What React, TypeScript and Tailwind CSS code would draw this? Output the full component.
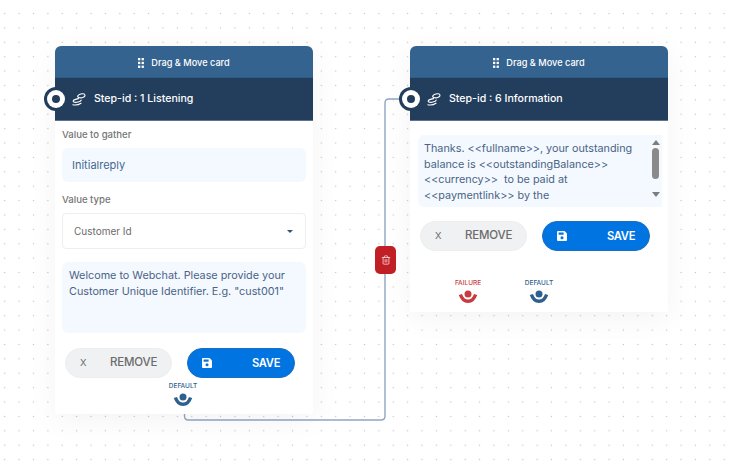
import React from "react";
import { Trash2 } from "lucide-react";

const font = "font-['Inter','Liberation_Sans',sans-serif]";

function Grip() {
  return (
    <svg width="6" height="10" viewBox="0 0 6 10" fill="#fff">
      <rect x="0" y="0" width="2.3" height="2.3" />
      <rect x="3.6" y="0" width="2.3" height="2.3" />
      <rect x="0" y="3.8" width="2.3" height="2.3" />
      <rect x="3.6" y="3.8" width="2.3" height="2.3" />
      <rect x="0" y="7.6" width="2.3" height="2.3" />
      <rect x="3.6" y="7.6" width="2.3" height="2.3" />
    </svg>
  );
}

function Squiggle() {
  return (
    <svg width="14" height="13" viewBox="0 0 14 13" fill="none" stroke="#fff" strokeWidth="1.1" strokeLinecap="round">
      <path d="M7.4 1.4C9.8.4 12.8.6 13 2.2 13.2 4 10.2 5.2 7.6 4.8 5.2 4.4 4.8 2.6 7.4 1.4Z" />
      <path d="M6.6 5.6C4 6 1.2 7 1.2 8.2 1.2 9.3 3.2 9.6 5 9.3 7 9 9 8.2 9.2 7" />
      <path d="M.8 11.8C3.6 12.4 7 11.6 9 10.2" />
    </svg>
  );
}

function FloppyIcon() {
  return (
    <svg width="10" height="10" viewBox="0 0 10 10" className="ml-[14px]">
      <path d="M1 0H7.6L10 2.4V9A1 1 0 0 1 9 10H1A1 1 0 0 1 0 9V1A1 1 0 0 1 1 0Z" fill="#fff" />
      <rect x="1.6" y="1.5" width="5" height="2.2" fill="#0074e0" />
      <circle cx="5" cy="6.8" r="1.5" fill="#0074e0" />
    </svg>
  );
}

function Head({ title }: { title: string }) {
  return (
    <>
      <div className="h-8 pt-[3px] bg-[#34638f] rounded-t-[6px] flex items-center justify-center gap-[7px] text-white text-[9.2px] font-medium border-b border-[#2f5a82]">
        <Grip />
        <span>Drag &amp; Move card</span>
      </div>
      <div className="h-[43px] bg-[#233d5d] border-b border-[#5c7390] flex items-center pl-[17px] gap-[8px] text-white text-[10.6px] font-medium">
        <Squiggle />
        <span>{title}</span>
      </div>
      <div className="absolute left-[-11px] top-[41px] w-[24px] h-[24px] rounded-full bg-[#233d5d] flex items-center justify-center">
        <div className="w-[18px] h-[18px] rounded-full bg-white flex items-center justify-center">
          <div className="w-[8px] h-[8px] rounded-full bg-[#233d5d]" />
        </div>
      </div>
    </>
  );
}

function Buttons() {
  return (
    <div className="flex gap-[15px]">
      <div className="w-[107px] h-[30px] rounded-full bg-[#f0f1f3] border border-[#eceef0] flex items-center text-[#6b6b6b]">
        <span className="ml-[14px] text-[9.5px] w-[30px]">X</span>
        <span className="text-[11.5px] font-medium tracking-[-0.2px]">REMOVE</span>
      </div>
      <div className="w-[108px] h-[30px] rounded-full bg-[#0074e0] border border-[#1a6fc0] flex items-center text-white">
        <FloppyIcon />
        <span className="ml-[40px] text-[11.2px] font-semibold tracking-[-0.3px]">SAVE</span>
      </div>
    </div>
  );
}

function Port({ label, color, className }: { label: string; color: string; className: string }) {
  return (
    <div className={`absolute flex flex-col items-center w-10 ${className}`}>
      <span className="text-[6.5px] font-medium leading-[8px]" style={{ color }}>{label}</span>
      <svg width="20" height="14" viewBox="0 0 20 14" className="mt-[3px]" fill="none">
        <circle cx="10" cy="4" r="3.5" fill={color} />
        <path d="M2.4 4.4C4 9.4 7 11.2 10 11.2 13 11.2 16 9.4 17.6 4.4" stroke={color} strokeWidth="3.4" />
      </svg>
    </div>
  );
}

export default function App() {
  return (
    <div className={`relative w-[736px] h-[466px] overflow-hidden bg-white bg-[radial-gradient(circle,#c4c4c4_0.7px,transparent_1px)] bg-[length:14.4px_14.4px] bg-[position:-2.5px_6.3px] ${font}`}>
      <svg className="absolute inset-0" width="736" height="466" fill="none">
        <path d="M184.5 404V416Q184.5 420 188.5 420H381Q385 420 385 416V103Q385 99 389 99H402" stroke="#8fa6c2" strokeWidth="1.4" />
      </svg>

      <div className="absolute left-[55px] top-[46px] w-[258px] h-[368px] bg-white shadow-[0_6px_30px_rgba(0,0,0,0.05)] rounded-t-[6px]">
        <Head title="Step-id : 1 Listening" />
        <div className="px-[7px] pt-[7px]">
          <div className="text-[9.6px] font-medium text-[#757575] leading-[14px]">Value to gather</div>
          <div className="mt-[6px] h-[34px] rounded-[6px] bg-[#f4f9ff] flex items-center pl-[10px] text-[11px] text-[#45688f]">Initialreply</div>
          <div className="mt-[11px] text-[9.6px] font-medium text-[#757575] leading-[14px]">Value type</div>
          <div className="mt-[6px] h-[36px] rounded-[4px] border border-[#eeeeee] flex items-center justify-between pl-[11px] pr-[12px] text-[10px] text-[#6b6b6b]">
            <span>Customer Id</span>
            <span className="w-0 h-0 border-x-[3.5px] border-x-transparent border-t-[3.5px] border-t-[#34527a]" />
          </div>
          <div className="mt-[13px] h-[71px] rounded-[6px] bg-[#f4f9ff] px-[7px] pt-[6px] text-[10.8px] leading-[16px] text-[#4a6386]">
            Welcome to Webchat. Please provide your Customer Unique Identifier. E.g. "cust001"
          </div>
          <div className="mt-[15px] ml-[3px]"><Buttons /></div>
        </div>
        <Port label="DEFAULT" color="#2f5f8d" className="left-[108px] top-[336px]" />
      </div>

      <div className="absolute left-[410px] top-[46px] w-[258px] h-[266px] bg-white shadow-[0_6px_30px_rgba(0,0,0,0.05)] rounded-t-[6px]">
        <Head title="Step-id : 6 Information" />
        <div className="px-[8px] pt-[14px]">
          <div className="h-[72px] w-[244px] rounded-l-[6px] bg-[#f4f9ff] flex overflow-hidden">
            <div className="flex-1 pl-[6px] pt-[6px] text-[10.8px] leading-[15.6px] text-[#4a6386] whitespace-pre">
              {"Thanks. <<fullname>>, your outstanding\nbalance is <<outstandingBalance>>\n<<currency>>  to be paid at\n<<paymentlink>> by the"}
            </div>
            <div className="w-[13px] flex flex-col items-center pt-[5px]">
              <span className="w-0 h-0 border-x-[4px] border-x-transparent border-b-[5px] border-b-[#7d7d7d]" />
              <span className="mt-[3px] w-[7px] h-[31px] rounded-full bg-[#8a8a8a]" />
              <span className="mt-[13px] w-0 h-0 border-x-[4px] border-x-transparent border-t-[5px] border-t-[#7d7d7d]" />
            </div>
          </div>
          <div className="mt-[14px] ml-[2px]"><Buttons /></div>
        </div>
        <Port label="FAILURE" color="#c93a3f" className="left-[38px] top-[233px]" />
        <Port label="DEFAULT" color="#2f5f8d" className="left-[109px] top-[233px]" />
      </div>

      <div className="absolute left-[375px] top-[246px] w-[21px] h-[28px] rounded-[5px] bg-[#c11f26] flex items-center justify-center">
        <Trash2 size={10} color="#f6d5d5" strokeWidth={2} />
      </div>
    </div>
  );
}
